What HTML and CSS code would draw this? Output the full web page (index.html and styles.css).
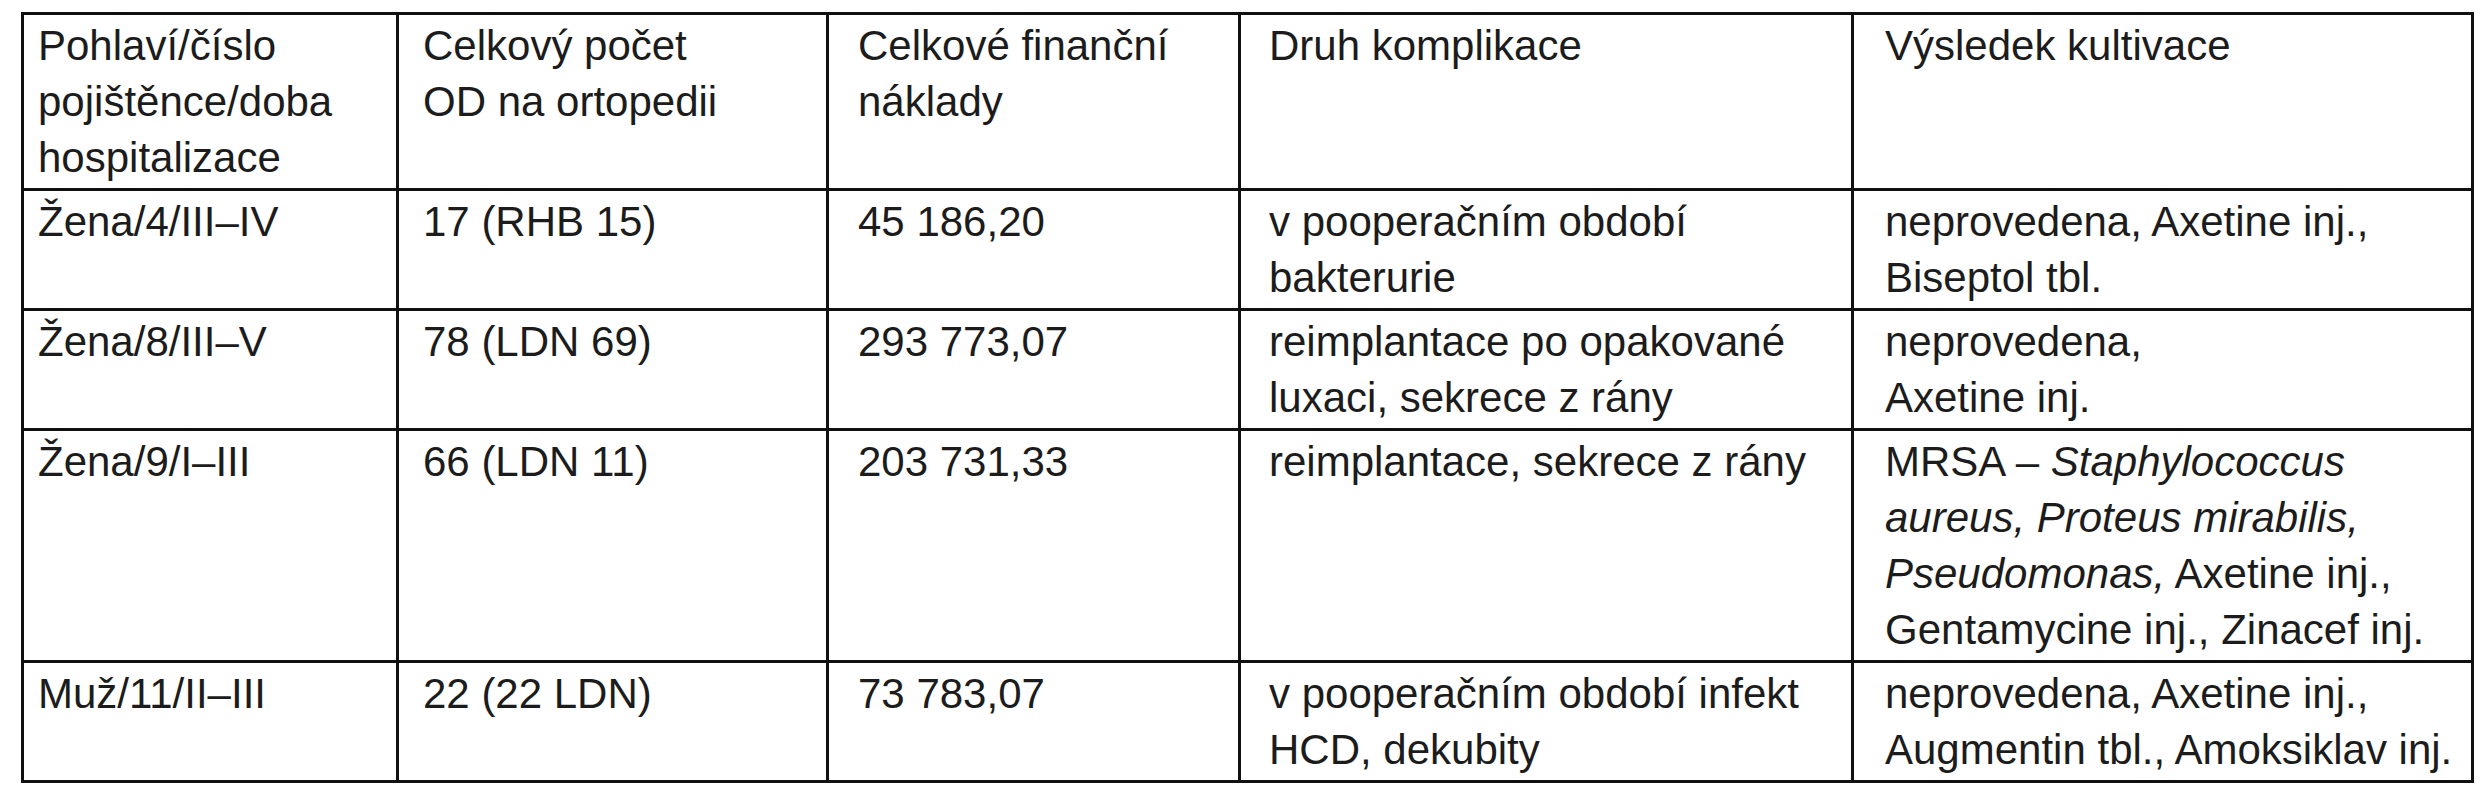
FILE: index.html
```html
<!DOCTYPE html>
<html lang="cs">
<head>
<meta charset="utf-8">
<title>Tabulka</title>
<link rel="stylesheet" href="styles.css">
</head>
<body>
<div class="page">
<table class="data">
  <colgroup>
    <col class="c1"><col class="c2"><col class="c3"><col class="c4"><col class="c5">
  </colgroup>
  <tr class="head">
    <td class="p1">Pohlaví/číslo<br>pojištěnce/doba<br>hospitalizace</td>
    <td class="p2">Celkový počet<br>OD na ortopedii</td>
    <td class="p3">Celkové finanční<br>náklady</td>
    <td class="p4">Druh komplikace</td>
    <td class="p5">Výsledek kultivace</td>
  </tr>
  <tr>
    <td class="p1">Žena/4/III–IV</td>
    <td class="p2">17 (RHB 15)</td>
    <td class="p3">45 186,20</td>
    <td class="p4">v pooperačním období<br>bakterurie</td>
    <td class="p5">neprovedena, Axetine inj.,<br>Biseptol tbl.</td>
  </tr>
  <tr>
    <td class="p1">Žena/8/III–V</td>
    <td class="p2">78 (LDN 69)</td>
    <td class="p3">293 773,07</td>
    <td class="p4">reimplantace po opakované<br>luxaci, sekrece z rány</td>
    <td class="p5">neprovedena,<br>Axetine inj.</td>
  </tr>
  <tr>
    <td class="p1">Žena/9/I–III</td>
    <td class="p2">66 (LDN 11)</td>
    <td class="p3">203 731,33</td>
    <td class="p4">reimplantace, sekrece z rány</td>
    <td class="p5">MRSA – <i>Staphylococcus</i><br><i>aureus, Proteus mirabilis,</i><br><i>Pseudomonas,</i> Axetine inj.,<br>Gentamycine inj., Zinacef inj.</td>
  </tr>
  <tr>
    <td class="p1">Muž/11/II–III</td>
    <td class="p2">22 (22 LDN)</td>
    <td class="p3">73 783,07</td>
    <td class="p4">v pooperačním období infekt<br>HCD, dekubity</td>
    <td class="p5">neprovedena, Axetine inj.,<br>Augmentin tbl., Amoksiklav inj.</td>
  </tr>
</table>
</div>
</body>
</html>
```

FILE: styles.css
```css
html, body {
  margin: 0;
  padding: 0;
  background: #ffffff;
}
.page {
  padding: 12px 0 0 21px;
}
.data {
  border-collapse: collapse;
  table-layout: fixed;
  width: 2452px;
  font-family: "Liberation Sans", Arial, sans-serif;
  font-size: 42px;
  line-height: 56px;
  color: #1c1c1c;
}
.c1 { width: 375px; }
.c2 { width: 430px; }
.c3 { width: 412px; }
.c4 { width: 613px; }
.c5 { width: 620px; }
.data td {
  border: 3px solid #111111;
  vertical-align: top;
  padding: 3px 6px 2px 24px;
  white-space: nowrap;
  overflow: hidden;
}
.data td.p1 { padding-left: 14px; }
.data td.p2 { padding-left: 24px; }
.data td.p3 { padding-left: 29px; }
.data td.p4 { padding-left: 28px; }
.data td.p5 { padding-left: 31px; }
```
